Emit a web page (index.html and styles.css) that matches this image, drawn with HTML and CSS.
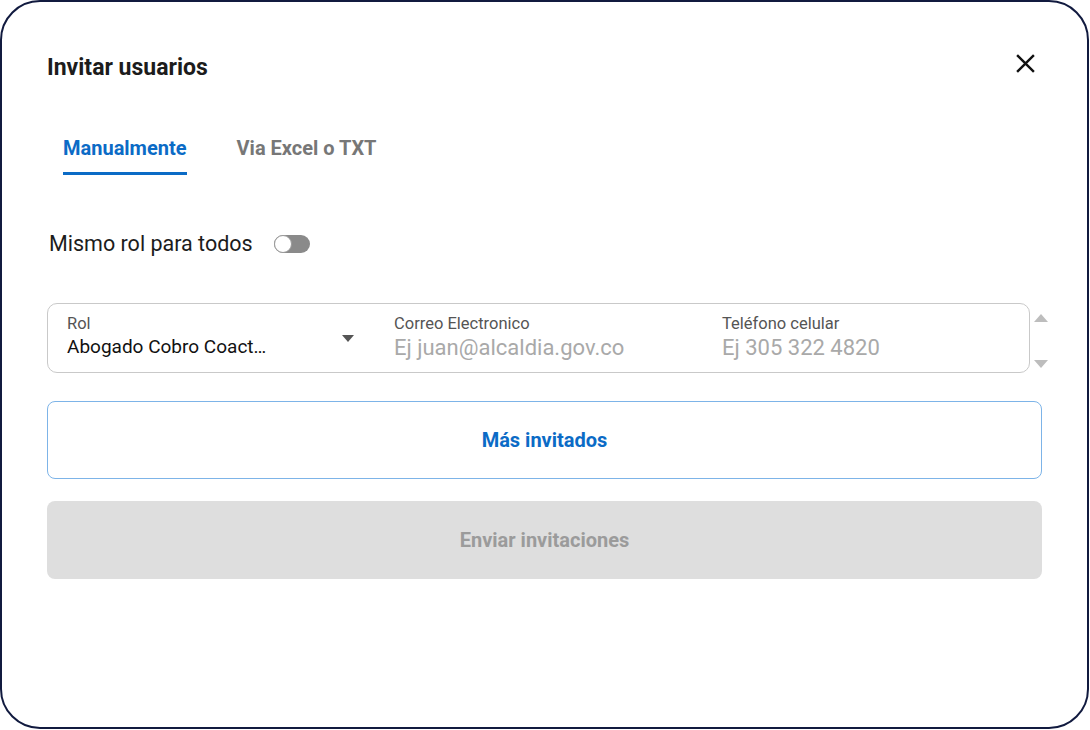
FILE: index.html
```html
<!DOCTYPE html>
<html lang="es">
<head>
  <meta charset="UTF-8" />
  <meta name="viewport" content="width=device-width, initial-scale=1.0" />
  <title>Invitar usuarios</title>
  <link rel="stylesheet" href="styles.css">
</head>
<body>
  <div class="modal">
    <div class="modal-header">
      <h1 class="title">Invitar usuarios</h1>
      <button class="close" aria-label="Cerrar">
        <svg width="21" height="21" viewBox="0 0 20 20">
          <path d="M2 2 L18 18 M18 2 L2 18" stroke="#111" stroke-width="2.3" fill="none"/>
        </svg>
      </button>
    </div>

    <div class="tabs">
      <div class="tab active">Manualmente</div>
      <div class="tab">Via Excel o TXT</div>
    </div>

    <div class="same-role">
      <span>Mismo rol para todos</span>
      <span class="switch"><span class="knob"></span></span>
    </div>

    <div class="row-wrap">
      <div class="invite-row">
        <div class="field field-role">
          <label>Rol</label>
          <div class="select">
            <span class="value">Abogado Cobro Coact…</span>
            <span class="caret"></span>
          </div>
        </div>
        <div class="field field-mail">
          <label>Correo Electronico</label>
          <input type="text" placeholder="Ej juan@alcaldia.gov.co">
        </div>
        <div class="field field-phone">
          <label>Teléfono celular</label>
          <input type="text" placeholder="Ej 305 322 4820">
        </div>
      </div>
      <div class="scroll-arrows">
        <span class="arrow up"></span>
        <span class="arrow down"></span>
      </div>
    </div>

    <button class="btn btn-outline">Más invitados</button>
    <button class="btn btn-disabled" disabled>Enviar invitaciones</button>
  </div>
</body>
</html>
```

FILE: styles.css
```css
* {
  box-sizing: border-box;
}

body {
  margin: 0;
  background: #fff;
  font-family: Roboto, "Liberation Sans", Arial, sans-serif;
  color: #1c1c1c;
}

.modal {
  width: 1089px;
  height: 729px;
  border: 2px solid #111a3f;
  border-radius: 40px;
  background: #fff;
  padding: 50px 46px 0 45px;
  display: flex;
  flex-direction: column;
}

.modal-header {
  display: flex;
  justify-content: space-between;
  align-items: center;
  height: 28px;
}

.title {
  margin: 4px 0 0;
  font-size: 23px;
  font-weight: 700;
  color: #1c1c1c;
  line-height: 28px;
}

.close {
  border: none;
  background: none;
  padding: 0;
  margin-right: 5px;
  margin-top: -6px;
  width: 21px;
  height: 21px;
  cursor: pointer;
}

/* tabs */
.tabs {
  display: flex;
  gap: 50px;
  margin-top: 56px;
  padding-left: 16px;
}

.tab {
  font-size: 20px;
  font-weight: 700;
  color: #777;
  line-height: 24px;
  padding-bottom: 12px;
  border-bottom: 3px solid transparent;
  cursor: pointer;
}

.tab.active {
  color: #0b6bc6;
  border-bottom-color: #0b6bc6;
}

.same-role {
  display: flex;
  align-items: center;
  gap: 21px;
  margin-top: 57px;
  padding-left: 2px;
  font-size: 21.5px;
  color: #1c1c1c;
  line-height: 24px;
}

.switch {
  position: relative;
  width: 36px;
  height: 18px;
  border-radius: 9px;
  background: #8a8a8a;
}

.knob {
  position: absolute;
  left: 0;
  top: 0;
  width: 18px;
  height: 18px;
  border-radius: 50%;
  background: #fff;
  border: 1px solid #9a9a9a;
}

/* invite row */
.row-wrap {
  display: flex;
  margin-top: 47px;
  margin-right: -7px;
}

.invite-row {
  flex: 1;
  display: flex;
  height: 70px;
  border: 1px solid #c9c9c9;
  border-radius: 10px;
  padding: 10px 0 0 19px;
}

.field {
  display: flex;
  flex-direction: column;
}

.field label {
  font-size: 16.5px;
  color: #555;
  line-height: 20px;
}

.field-role {
  width: 327px;
}

.field-mail {
  width: 328px;
}

.field-phone {
  flex: 1;
}

.select {
  display: flex;
  justify-content: space-between;
  padding-right: 40px;
  height: 26px;
}

.value {
  font-size: 19px;
  line-height: 26px;
  color: #111;
}

.caret {
  align-self: flex-start;
  margin-top: 1px;
  width: 0;
  height: 0;
  border-left: 6.5px solid transparent;
  border-right: 6.5px solid transparent;
  border-top: 7px solid #555;
}

.field input {
  border: none;
  outline: none;
  padding: 0;
  font-family: inherit;
  font-size: 22px;
  height: 26px;
  color: #111;
  background: transparent;
}

.field input::placeholder {
  color: #a9a9a9;
}

.scroll-arrows {
  width: 14px;
  margin-left: 4px;
  display: flex;
  flex-direction: column;
  justify-content: space-between;
  padding: 11px 0 5px;
}

.arrow {
  width: 0;
  height: 0;
  border-left: 7px solid transparent;
  border-right: 7px solid transparent;
}

.arrow.up {
  border-bottom: 8px solid #bdbdbd;
}

.arrow.down {
  border-top: 8px solid #bdbdbd;
}

/* buttons */
.btn {
  display: block;
  width: 995px;
  height: 78px;
  border-radius: 8px;
  font-family: inherit;
  font-size: 20px;
  font-weight: 700;
  cursor: pointer;
}

.btn-outline {
  margin-top: 28px;
  border: 1px solid #7db4e8;
  background: #fff;
  color: #0b6bc6;
}

.btn-disabled {
  margin-top: 22px;
  border: none;
  background: #dedede;
  color: #9b9b9b;
  cursor: default;
}
```
